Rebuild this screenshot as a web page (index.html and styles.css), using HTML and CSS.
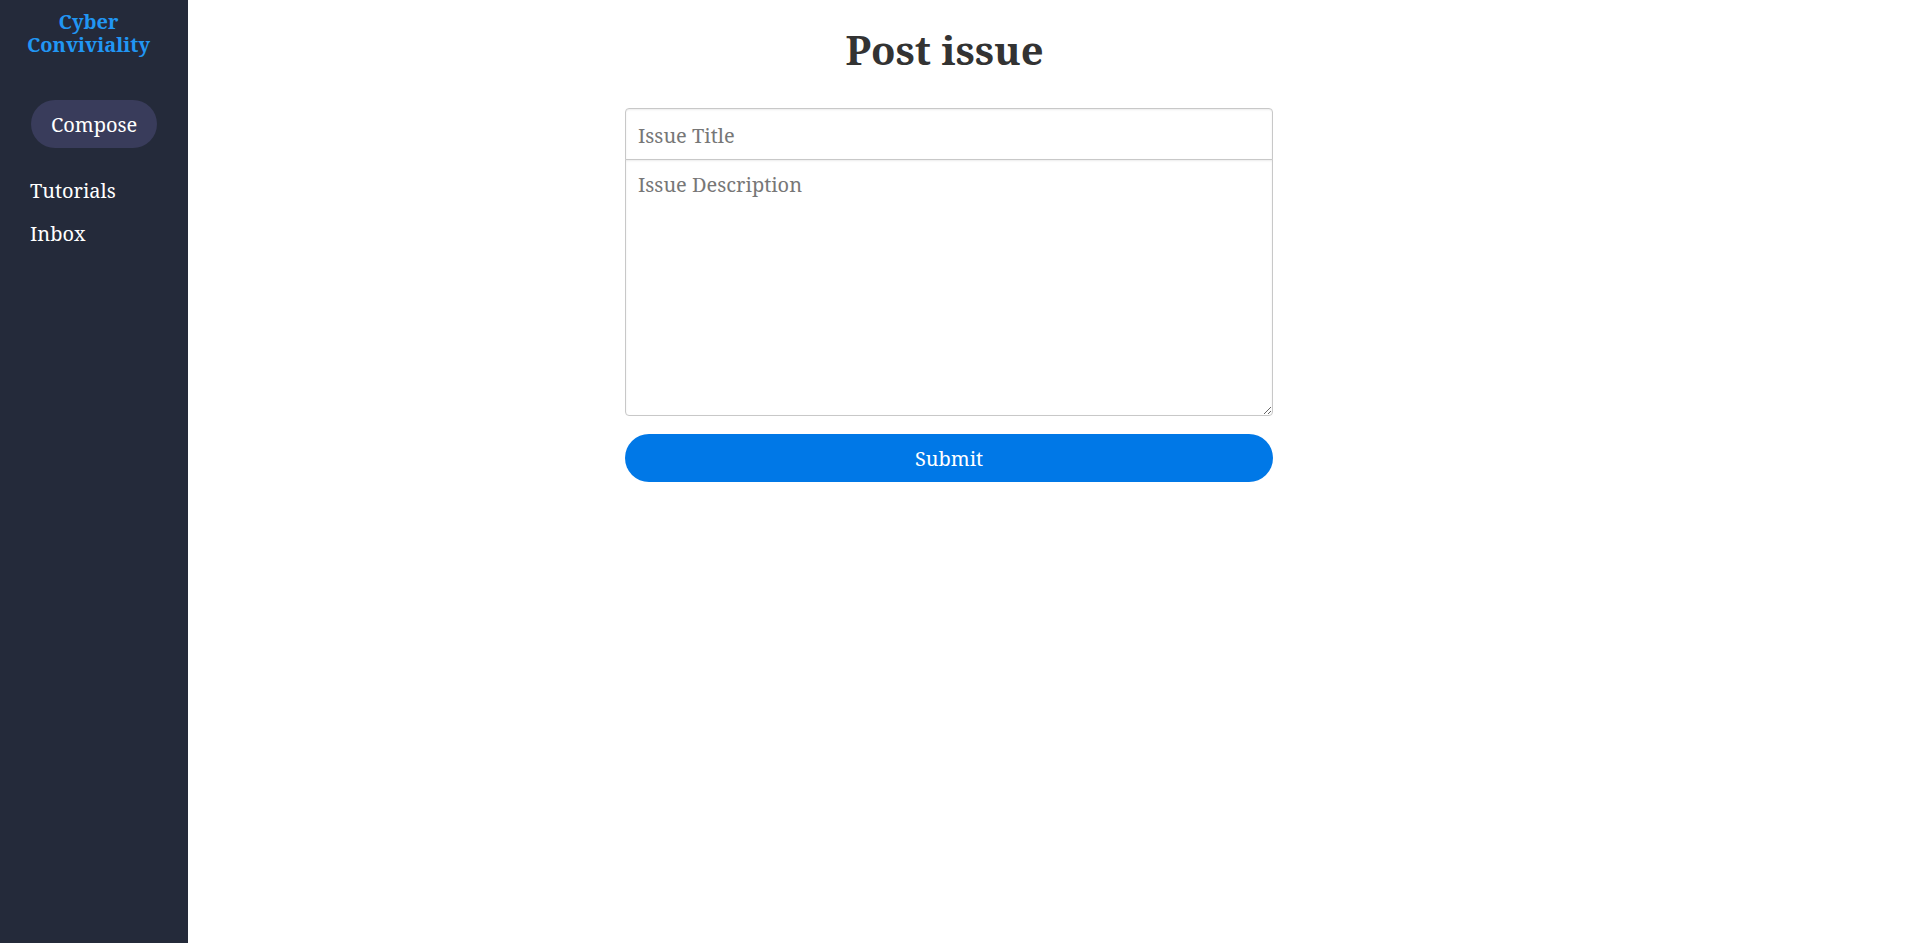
FILE: index.html
```html
<!DOCTYPE html>
<html lang="en">
<head>
<meta charset="utf-8">
<title>Post issue</title>
<link rel="stylesheet" href="styles.css">
</head>
<body>
<aside class="sidebar">
  <div class="brand">Cyber<br>Conviviality</div>
  <button class="compose" type="button">Compose</button>
  <nav class="nav">
    <a class="nav-link" href="#">Tutorials</a>
    <a class="nav-link" href="#">Inbox</a>
  </nav>
</aside>
<main class="main">
  <div class="content">
    <h1 class="title">Post issue</h1>
    <form class="issue-form">
      <input class="field field-title" type="text" placeholder="Issue Title">
      <textarea class="field field-desc" placeholder="Issue Description"></textarea>
      <button class="submit" type="button">Submit</button>
    </form>
  </div>
</main>
</body>
</html>
```

FILE: styles.css
```css
html, body {
  margin: 0;
  padding: 0;
  height: 100%;
}

body {
  display: flex;
  font-family: "Noto Serif", "DejaVu Serif", "Liberation Serif", serif;
  font-size: 20px;
  background: #ffffff;
}

.sidebar {
  width: 188px;
  flex: 0 0 188px;
  background: #242a3a;
  padding: 11px 0 0 30px;
  box-sizing: border-box;
  display: flex;
  flex-direction: column;
  align-items: flex-start;
}

.brand {
  width: 177px;
  margin-left: -30px;
  text-align: center;
  color: #2196f3;
  font-weight: bold;
  font-size: 20px;
  line-height: 22.5px;
}

.compose {
  margin-top: 44px;
  margin-left: 1px;
  height: 48px;
  padding: 0 20px;
  border: none;
  border-radius: 24px;
  background: #393c5b;
  color: #ffffff;
  font-family: inherit;
  font-size: 20px;
  line-height: normal;
  cursor: pointer;
}

.nav {
  margin-top: 21px;
  display: flex;
  flex-direction: column;
}

.nav-link {
  display: block;
  padding: 8px 0;
  color: #ffffff;
  text-decoration: none;
  font-size: 20px;
  line-height: normal;
}

.main {
  flex: 1;
  display: flex;
  justify-content: center;
  padding-right: 210px;
}

.content {
  width: 648px;
}

.title {
  margin: 22px 0 31px;
  padding-right: 9px;
  text-align: center;
  font-size: 40px;
  font-weight: bold;
  line-height: normal;
  color: #333333;
}

.issue-form {
  display: flex;
  flex-direction: column;
}

.field {
  display: block;
  width: 100%;
  box-sizing: border-box;
  border: 1px solid #c8c8c8;
  box-shadow: inset 0 1px 2px rgba(0, 0, 0, 0.08);
  font-family: inherit;
  font-size: 20px;
  color: #333333;
  background: #ffffff;
  outline: none;
}

.field::placeholder {
  color: #777777;
}

.field-title {
  height: 52px;
  padding: 2px 12px 0;
  border-radius: 4px 4px 0 0;
}

.field-desc {
  margin-top: -1px;
  height: 257px;
  padding: 11px 12px 10px;
  line-height: normal;
  border-radius: 0 0 4px 4px;
  resize: vertical;
}

.submit {
  margin-top: 18px;
  height: 48px;
  width: 100%;
  border: none;
  border-radius: 24px;
  background: #0078e7;
  color: #ffffff;
  font-family: inherit;
  font-size: 20px;
  line-height: normal;
  cursor: pointer;
}
```
